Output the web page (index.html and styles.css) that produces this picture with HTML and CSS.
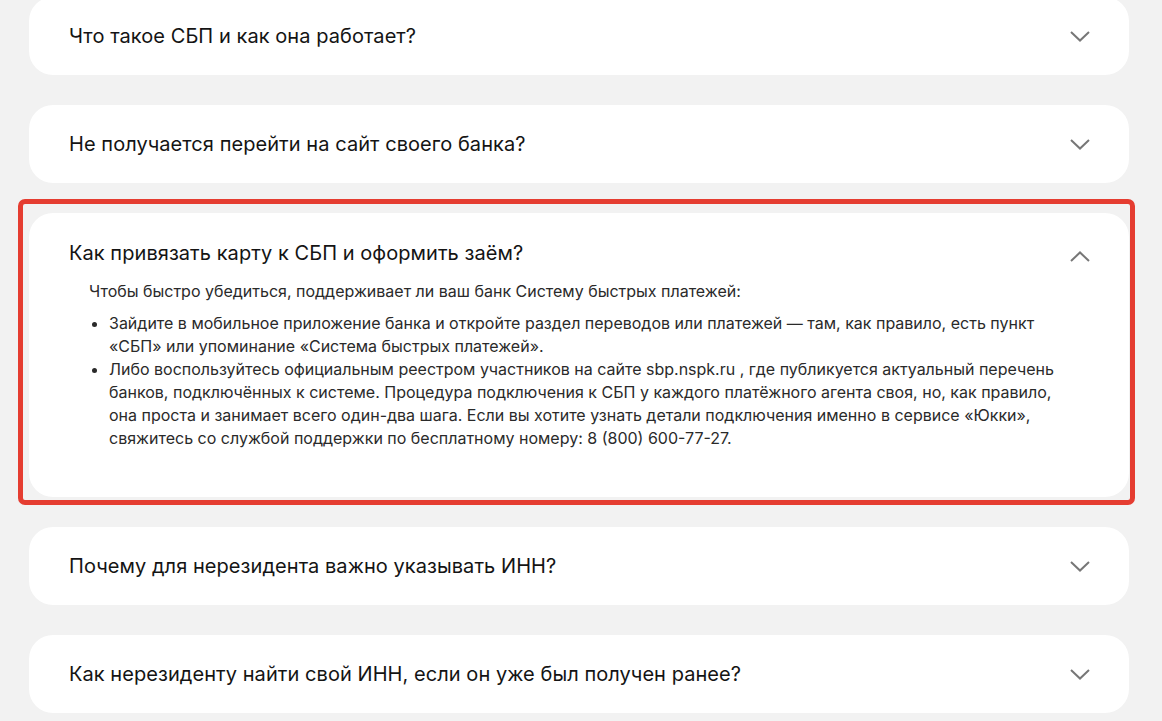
FILE: index.html
```html
<!DOCTYPE html>
<html lang="ru">
<head>
<meta charset="utf-8">
<title>FAQ СБП</title>
<link rel="stylesheet" href="styles.css">
</head>
<body>
<div class="faq">
  <div class="card">
    <div class="head">
      <span class="q">Что такое СБП и как она работает?</span>
      <svg class="chev" width="20" height="11" viewBox="0 0 20 11"><polyline points="1,1 10,9.5 19,1" fill="none" stroke="#777" stroke-width="2"/></svg>
    </div>
  </div>
  <div class="card">
    <div class="head">
      <span class="q">Не получается перейти на сайт своего банка?</span>
      <svg class="chev" width="20" height="11" viewBox="0 0 20 11"><polyline points="1,1 10,9.5 19,1" fill="none" stroke="#777" stroke-width="2"/></svg>
    </div>
  </div>
  <div class="card open">
    <div class="head">
      <span class="q">Как привязать карту к СБП и оформить заём?</span>
      <svg class="chev up" width="20" height="11" viewBox="0 0 20 11"><polyline points="1,10 10,1.5 19,10" fill="none" stroke="#777" stroke-width="2"/></svg>
    </div>
    <div class="body">
      <p>Чтобы быстро убедиться, поддерживает ли ваш банк Систему быстрых платежей:</p>
      <ul>
        <li>Зайдите в мобильное приложение банка и откройте раздел переводов или платежей — там, как правило, есть пункт «СБП» или упоминание «Система быстрых платежей».</li>
        <li>Либо воспользуйтесь официальным реестром участников на сайте sbp.nspk.ru , где публикуется актуальный перечень банков, подключённых к системе. Процедура подключения к СБП у каждого платёжного агента своя, но, как правило, она проста и занимает всего один-два шага. Если вы хотите узнать детали подключения именно в сервисе «Юкки», свяжитесь со службой поддержки по бесплатному номеру: 8 (800) 600-77-27.</li>
      </ul>
    </div>
  </div>
  <div class="card">
    <div class="head">
      <span class="q">Почему для нерезидента важно указывать ИНН?</span>
      <svg class="chev" width="20" height="11" viewBox="0 0 20 11"><polyline points="1,1 10,9.5 19,1" fill="none" stroke="#777" stroke-width="2"/></svg>
    </div>
  </div>
  <div class="card">
    <div class="head">
      <span class="q">Как нерезиденту найти свой ИНН, если он уже был получен ранее?</span>
      <svg class="chev" width="20" height="11" viewBox="0 0 20 11"><polyline points="1,1 10,9.5 19,1" fill="none" stroke="#777" stroke-width="2"/></svg>
    </div>
  </div>
  <div class="highlight"></div>
</div>
</body>
</html>
```
FILE: styles.css
```css
html, body {
  margin: 0;
  padding: 0;
  background: #f2f2f2;
  font-family: Inter, "Noto Sans", sans-serif;
  color: #1b1b1b;
}
.faq {
  position: relative;
  display: flex;
  flex-direction: column;
  gap: 30px;
  margin-top: -3px;
  padding: 0 33px 0 29px;
}
.card {
  background: #fff;
  border-radius: 24px;
}
.head {
  height: 78px;
  display: flex;
  align-items: center;
  justify-content: space-between;
  padding: 0 39px 0 40px;
}
.q {
  font-size: 20px;
  font-weight: 400;
  line-height: 30px;
  letter-spacing: 0.06px;
  color: #141414;
}
.chev {
  display: block;
  flex: none;
}
.open .head {
  height: auto;
  padding-top: 25px;
  padding-bottom: 12px;
}
.chev.up {
  margin-top: 6px;
}
.body {
  padding: 0 60px 47px 60px;
  font-size: 16px;
  line-height: 23px;
  color: #2a2a2a;
}
.body p {
  margin: 0 0 9px 0;
}
.body ul {
  margin: 0;
  padding-left: 20px;
}
.highlight {
  position: absolute;
  left: 18px;
  top: 202px;
  width: 1107px;
  height: 296px;
  border: 5px solid #e53d31;
  border-radius: 7px;
  pointer-events: none;
}
```
